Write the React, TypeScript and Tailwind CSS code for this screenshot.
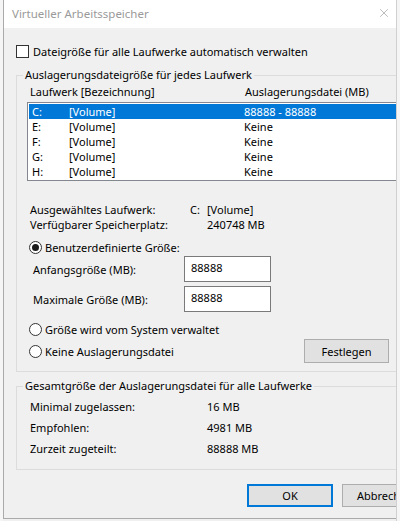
import { X } from "lucide-react";

const drives = [
  { letter: "C:", label: "[Volume]", size: "88888 - 88888", selected: true },
  { letter: "E:", label: "[Volume]", size: "Keine" },
  { letter: "F:", label: "[Volume]", size: "Keine" },
  { letter: "G:", label: "[Volume]", size: "Keine" },
  { letter: "H:", label: "[Volume]", size: "Keine" },
];

function Radio({ checked, label }: { checked?: boolean; label: string }) {
  return (
    <div className="flex items-center h-[15px]">
      <span className="flex items-center justify-center w-[13px] h-[13px] rounded-full border border-[#333333] bg-white">
        {checked && <span className="w-[7px] h-[7px] rounded-full bg-[#1a1a1a]" />}
      </span>
      <span className="ml-[3px] leading-[15px]">{label}</span>
    </div>
  );
}

function Field({ label, value }: { label: string; value: string }) {
  return (
    <div className="flex items-center pl-[16px]">
      <span className="w-[151px] leading-[15px]">{label}</span>
      <div className="w-[87px] h-[26px] border border-[#7a7a7a] bg-white pl-[6px] pt-[3px] leading-[15px]">
        {value}
      </div>
    </div>
  );
}

export default function App() {
  return (
    <div className="flex w-[400px] h-[521px] overflow-hidden bg-[#f0f0f0] font-['Noto_Sans',sans-serif] text-[11px] text-black">
      <div className="w-[3px] shrink-0 bg-[#f5f5f5]" />

      <div className="flex flex-col w-[393px] shrink-0 h-[519px] border-l border-b border-[#aaaaaa] overflow-hidden">
        {/* title bar */}
        <div className="flex items-center justify-between h-[28px] shrink-0 bg-white pl-[8px] pr-[5px]">
          <span className="text-[11.5px] text-[#9a9a9a] leading-[15px] -mt-[1px]">
            Virtueller Arbeitsspeicher
          </span>
          <X size={14} strokeWidth={1} className="text-[#8a8a8a] -mt-[2px]" />
        </div>

        {/* body */}
        <div className="w-[440px] pl-[12px]">
          <div className="flex items-center mt-[17px] h-[13px]">
            <span className="w-[13px] h-[13px] border border-[#333333] bg-white" />
            <span className="ml-[4px] leading-[15px]">
              Dateigröße für alle Laufwerke automatisch verwalten
            </span>
          </div>

          <fieldset className="mt-[10px] border border-[#dcdcdc] pb-[8px]">
            <legend className="ml-[6px] px-[2px] leading-[14px]">
              Auslagerungsdateigröße für jedes Laufwerk
            </legend>

            <div className="flex pt-[2px] pl-[13px] h-[17px] leading-[15px]">
              <span className="w-[215px]">Laufwerk [Bezeichnung]</span>
              <span>Auslagerungsdatei (MB)</span>
            </div>

            <div className="ml-[10px] mt-[3px] w-[400px] border border-[#828790] bg-white p-[1px]">
              {drives.map((d) => (
                <div
                  key={d.letter}
                  className={
                    d.selected
                      ? "flex h-[15px] leading-[15px] pl-[3px] bg-[#0078d7] text-white"
                      : "flex h-[15px] leading-[15px] pl-[3px]"
                  }
                >
                  <span className="w-[37px]">{d.letter}</span>
                  <span className="w-[175px]">{d.label}</span>
                  <span>{d.size}</span>
                </div>
              ))}
            </div>

            <div className="mt-[21px] pl-[13px] leading-[15px]">
              <div className="flex">
                <span className="w-[160px]">Ausgewähltes Laufwerk:</span>
                <span className="w-[17px]">C:</span>
                <span>[Volume]</span>
              </div>
              <div className="flex">
                <span className="w-[177px]">Verfügbarer Speicherplatz:</span>
                <span>240748 MB</span>
              </div>
            </div>

            <div className="mt-[8px] pl-[12px]">
              <Radio checked label="Benutzerdefinierte Größe:" />
            </div>

            <div className="mt-[1px] flex flex-col gap-[4px]">
              <Field label="Anfangsgröße (MB):" value="88888" />
              <Field label="Maximale Größe (MB):" value="88888" />
            </div>

            <div className="mt-[10px] pl-[12px]">
              <Radio label="Größe wird vom System verwaltet" />
            </div>

            <div className="mt-[2px] pl-[12px] flex items-center">
              <div className="w-[275px]">
                <Radio label="Keine Auslagerungsdatei" />
              </div>
              <button className="w-[85px] h-[24px] border border-[#adadad] bg-[#e1e1e1] leading-[15px]">
                Festlegen
              </button>
            </div>
          </fieldset>

          <fieldset className="mt-[7px] border border-[#dcdcdc] pt-[4px] pb-[9px]">
            <legend className="ml-[6px] px-[2px] leading-[14px]">
              Gesamtgröße der Auslagerungsdatei für alle Laufwerke
            </legend>
            {[
              ["Minimal zugelassen:", "16 MB"],
              ["Empfohlen:", "4981 MB"],
              ["Zurzeit zugeteilt:", "88888 MB"],
            ].map(([label, value]) => (
              <div key={label} className="flex items-center h-[21px] pl-[13px]">
                <span className="w-[177px]">{label}</span>
                <span>{value}</span>
              </div>
            ))}
          </fieldset>

          <div className="flex mt-[14px] pl-[231px] gap-[9px]">
            <button className="w-[86px] h-[23px] border-2 border-[#0078d7] bg-[#e1e1e1] leading-[15px]">
              OK
            </button>
            <button className="w-[86px] h-[23px] border border-[#adadad] bg-[#e1e1e1] leading-[15px]">
              Abbrechen
            </button>
          </div>
        </div>
      </div>

      <div className="w-[1px] shrink-0 bg-[#d0d0d0]" />
      <div className="flex-1 bg-[#f5f5f5]" />
    </div>
  );
}
